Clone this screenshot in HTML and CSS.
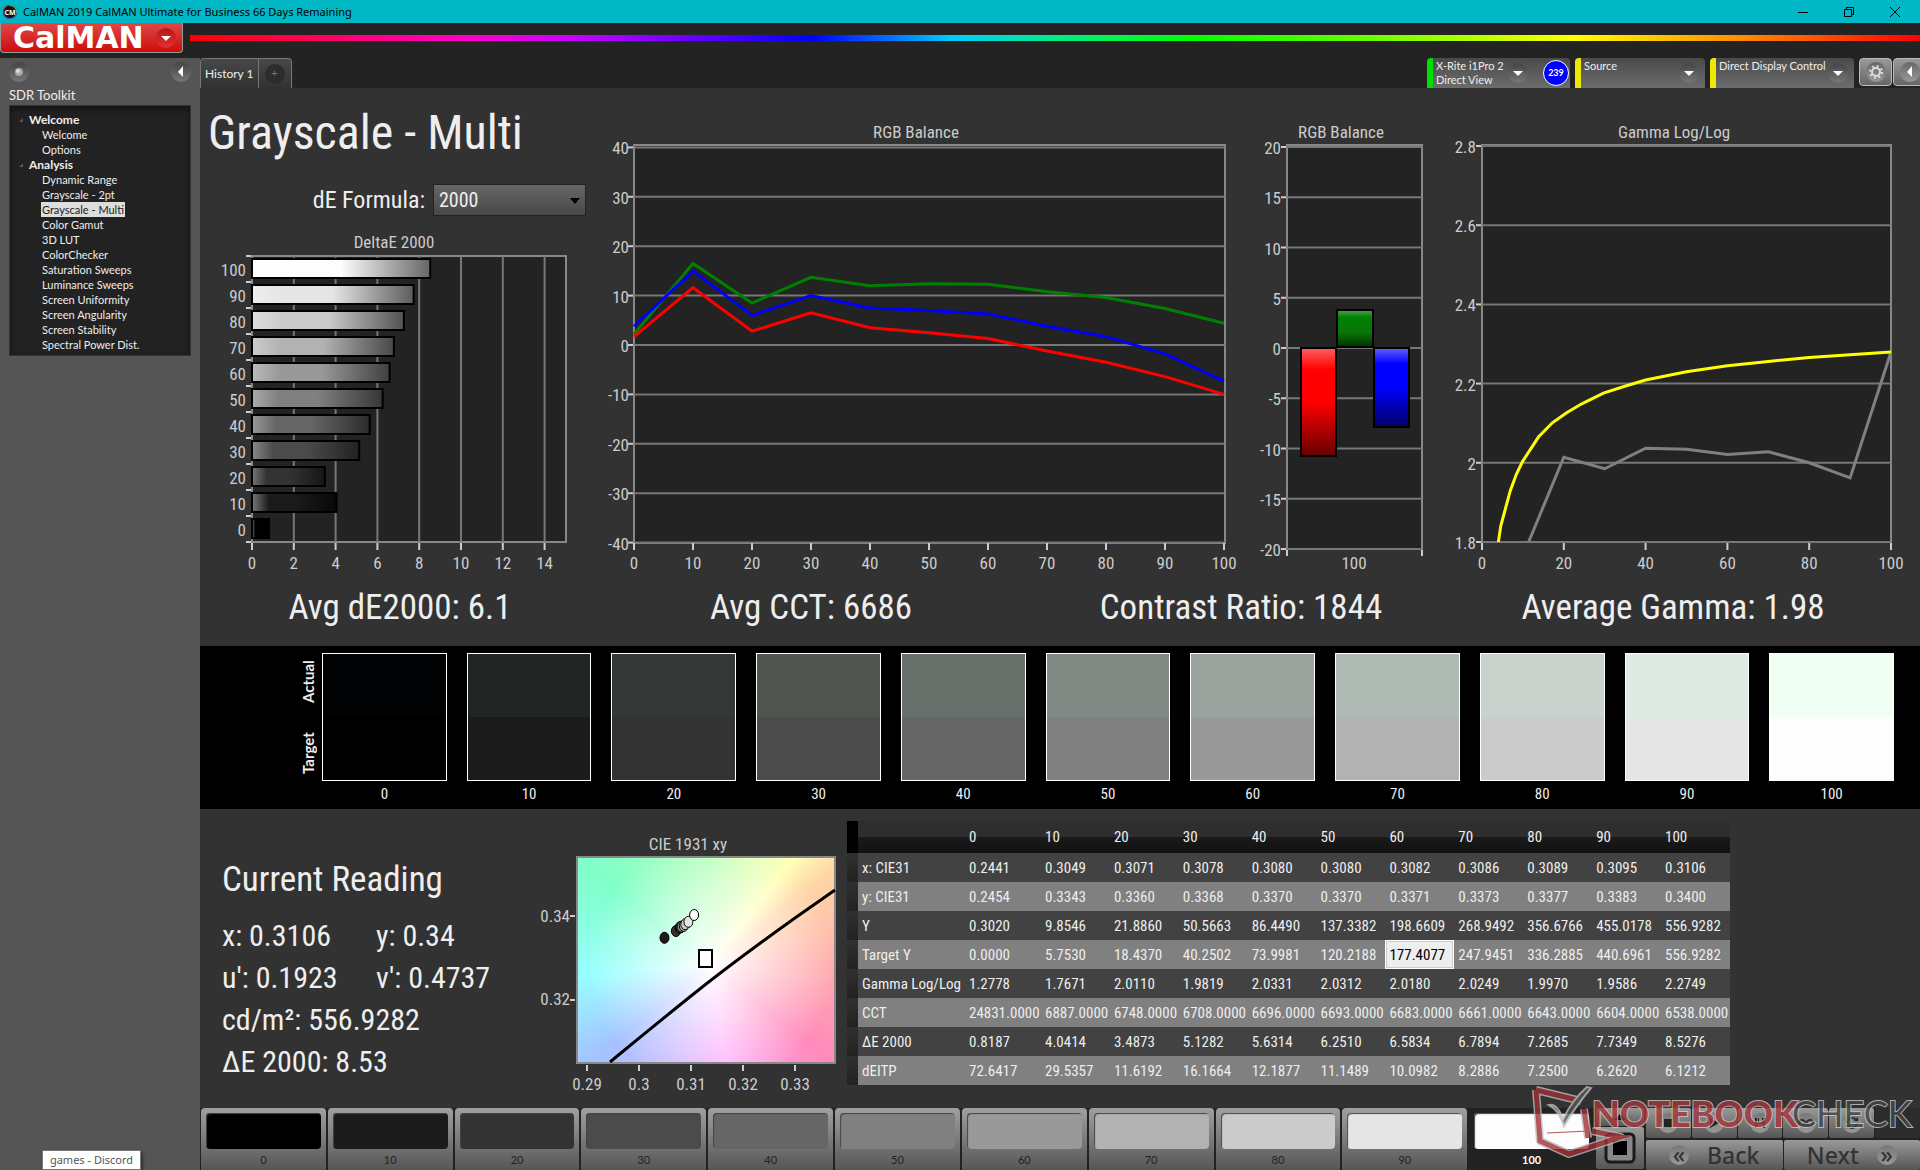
FILE: index.html
```
<!DOCTYPE html>
<html lang="en">
<head>
    <meta charset="UTF-8">
    <meta name="viewport" content="width=device-width, initial-scale=1.0">
    <title>CalMAN 2019</title>
    <link rel="stylesheet" href="styles.css">
</head>
<body>
    <header class="titlebar">
        <svg class="titlebar-icon" viewBox="0 0 16 16">
            <circle cx="8" cy="8" r="7" fill="#111"/>
            <path d="M1.5 8A6.500 6.500 0 0 1 8 1.500" stroke="#c22" fill="none"/>
            <path d="M8 1.500A6.500 6.500 0 0 1 14.500 8" stroke="#9c2" fill="none"/>
            <path d="M14.500 8A6.500 6.500 0 0 1 8 14.500" stroke="#28c" fill="none"/>
            <path d="M8 14.500A6.500 6.500 0 0 1 1.500 8" stroke="#a2c" fill="none"/>
            <text x="8" y="11" text-anchor="middle">CM</text>
        </svg>
        <span class="titlebar-text">CalMAN 2019 CalMAN Ultimate for Business 66 Days Remaining</span>
        <div class="window-controls">
            <button aria-label="Minimize"><svg viewBox="0 0 12 12"><path d="M1 6.500h10"/></svg></button>
            <button aria-label="Restore"><svg viewBox="0 0 12 12"><path d="M1.500 3.500h7v7h-7zM3.500 3.500v-2h7v7h-2"/></svg></button>
            <button aria-label="Close"><svg viewBox="0 0 12 12"><path d="M1 1l10 10M11 1L1 11"/></svg></button>
        </div>
    </header>

    <div class="brandbar">
        <button class="logo">CalMAN <span class="round round-red"><svg viewBox="0 0 20 20"><path d="M5 8h10l-5 5z"/></svg></span></button>
        <div class="rainbow"></div>
    </div>

    <div class="app">
        <aside class="sidebar">
            <div class="sidebar-top">
                <button class="round" aria-label="Pin"><svg viewBox="0 0 20 20"><circle cx="10" cy="10" r="4" fill="#aaa"/><circle cx="9" cy="9" r="2" fill="#ddd"/></svg></button>
                <button class="round" aria-label="Collapse"><svg viewBox="0 0 20 20"><path d="M12 4v11l-5-5z"/></svg></button>
            </div>
            <h2>SDR Toolkit</h2>
            <nav class="tree">
                <h3>Welcome</h3>
                <a href="#">Welcome</a>
                <a href="#">Options</a>
                <h3>Analysis</h3>
                <a href="#">Dynamic Range</a>
                <a href="#">Grayscale - 2pt</a>
                <a href="#" class="active">Grayscale - Multi</a>
                <a href="#">Color Gamut</a>
                <a href="#">3D LUT</a>
                <a href="#">ColorChecker</a>
                <a href="#">Saturation Sweeps</a>
                <a href="#">Luminance Sweeps</a>
                <a href="#">Screen Uniformity</a>
                <a href="#">Screen Angularity</a>
                <a href="#">Screen Stability</a>
                <a href="#">Spectral Power Dist.</a>
            </nav>
            <div class="tooltip">games - Discord</div>
        </aside>

        <main class="content">
            <div class="tabs">
                <button class="tab">History 1</button>
                <button class="tab tab-add" aria-label="Add tab"><span class="round round-dark">+</span></button>
                <div class="devices">
                    <button class="device green">
                        <span class="device-name">X-Rite i1Pro 2<br>Direct View</span>
                        <span class="round"><svg viewBox="0 0 20 20"><path d="M5 8h10l-5 5z"/></svg></span>
                        <span class="badge">239</span>
                    </button>
                    <button class="device">
                        <span class="device-name">Source</span>
                        <span class="round"><svg viewBox="0 0 20 20"><path d="M5 8h10l-5 5z"/></svg></span>
                    </button>
                    <button class="device device-wide">
                        <span class="device-name">Direct Display Control</span>
                        <span class="round"><svg viewBox="0 0 20 20"><path d="M5 8h10l-5 5z"/></svg></span>
                    </button>
                    <div class="tools">
                        <button class="tool" aria-label="Settings"><span class="round round-light"><svg viewBox="0 0 20 20"><circle cx="10" cy="10" r="4" fill="none" stroke="#ddd" stroke-width="2"/><circle cx="10" cy="10" r="6" fill="none" stroke="#ddd" stroke-width="2" stroke-dasharray="2 2.700"/></svg></span></button>
                        <button class="tool" aria-label="Expand"><span class="round round-light"><svg viewBox="0 0 20 20"><path d="M12 4v11l-5-5z"/></svg></span></button>
                    </div>
                </div>
            </div>

            <section class="charts">
                <div class="left">
                    <h1>Grayscale - Multi</h1>
                    <div class="formula">
                        <label for="formula">dE Formula:</label>
                        <select id="formula"><option>2000</option></select>
                    </div>
                    <svg id="deltae" class="chart" viewBox="200 230 400 350"></svg>
                </div>
                <svg id="balance" class="chart" viewBox="600 110 640 480"></svg>
                <svg id="bars" class="chart" viewBox="1240 110 200 480"></svg>
                <svg id="gamma" class="chart" viewBox="1440 110 480 480"></svg>
            </section>

            <section class="stats">
                <div>Avg dE2000: 6.1</div>
                <div>Avg CCT: 6686</div>
                <div>Contrast Ratio: 1844</div>
                <div>Average Gamma: 1.98</div>
            </section>

            <section class="swatches">
                <div class="swatch-side"><span>Actual</span><span>Target</span></div>
                <div class="swatch-list" id="swatches"></div>
            </section>

            <section class="details">
                <div class="reading">
                    <h2>Current Reading</h2>
                    <div class="reading-row"><span>x: 0.3106</span><span>y: 0.34</span></div>
                    <div class="reading-row"><span>u': 0.1923</span><span>v': 0.4737</span></div>
                    <div>cd/m²: 556.9282</div>
                    <div>ΔE 2000: 8.53</div>
                </div>
                <svg id="cie" class="chart" viewBox="532 821 315 285">
                    <foreignObject x="577" y="857" width="258" height="206"><div class="cie-colors"></div></foreignObject>
                </svg>
                <table class="results" id="results"></table>
            </section>

            <footer class="bottombar">
                <div class="levels" id="levels"></div>
                <div class="stop">
                    <button aria-label="Up"><svg viewBox="0 0 48 18"><path d="M18 12l6-6 6 6z"/></svg></button>
                    <button aria-label="Stop"><svg viewBox="0 0 48 42"><rect x="10" y="7" width="28" height="28" rx="4" fill="#888" stroke="#1a1a1a" stroke-width="3"/><rect x="17" y="14" width="14" height="14" fill="#000"/></svg></button>
                </div>
                <div class="transport">
                    <div class="transport-row">
                        <button aria-label="Stop reading"><span class="round"><svg viewBox="0 0 20 20"><path d="M6 6h8v8H6z"/></svg></span></button>
                        <button aria-label="Play"><span class="round"><svg viewBox="0 0 20 20"><path d="M6 5l9 5-9 5z"/></svg></span></button>
                        <button aria-label="Save"><span class="round"><svg viewBox="0 0 20 20"><path d="M5 5h2v10H5zM13 5h2v10h-2zM8 5h1v5h3V5h1v6H8z"/></svg></span></button>
                        <button aria-label="Loop"><span class="round"><svg viewBox="0 0 20 20"><path d="M10 10c-3-5-7-3-7 0s4 5 7 0c3-5 7-3 7 0s-4 5-7 0z" fill="none" stroke="#333" stroke-width="2"/></svg></span></button>
                        <button aria-label="Refresh"><span class="round"><svg viewBox="0 0 20 20"><path d="M5 10a5 5 0 0 1 9-3M15 10a5 5 0 0 1-9 3" fill="none" stroke="#333" stroke-width="2"/><path d="M12 8h4V4zM8 12H4v4z"/></svg></span></button>
                        <button class="off" aria-label="Options"></button>
                    </div>
                    <div class="transport-row nav">
                        <button><span class="round">«</span> Back</button>
                        <button>Next <span class="round">»</span></button>
                    </div>
                </div>
                <svg class="watermark" viewBox="0 0 384 76">
                    <g class="mark-edge">
                        <path d="M5 5L50 16M5 5L9 56 38 69 90 52 61 46M53 24l4 29"/>
                    </g>
                    <g class="mark-red">
                        <path d="M5 5L50 16M5 5L9 56 38 69 90 52 61 46M53 24l4 29"/>
                    </g>
                    <path d="M18 20q8-2 14 14Q42 14 56 2l4 1Q44 22 33 41 28 25 18 20z" fill="#555" stroke="#bbb" stroke-width="2"/>
                    <path d="M16 48L58 46" stroke="#a03035"/>
                    <text x="61" y="42" class="mark-bold">NOTEBOOK</text>
                    <text x="261" y="42" class="mark-thin">CHECK</text>
                </svg>
            </footer>
        </main>
    </div>
    <script src="script.js"></script>
</body>
</html>
```
FILE: styles.css
```
* {
    margin: 0;
    padding: 0;
    box-sizing: border-box;
}
body {
    min-height: 100vh;
    display: flex;
    flex-direction: column;
    background-color: #232323;
    color: #eee;
    font-family: "Roboto Condensed", Roboto, "Liberation Sans", sans-serif;
}
button {
    border: 0;
    background: none;
    color: inherit;
    font: inherit;
}
svg {
    display: block;
}

/* window title */
.titlebar {
    height: 23px;
    display: flex;
    align-items: center;
    background-color: #00b7c5;
    color: #000;
    font-family: "Noto Sans", sans-serif;
    font-size: 11px;
}
.titlebar-icon {
    width: 16px;
    height: 16px;
    margin: 0 5px 0 2px;
    font-size: 7px;
    font-weight: bold;
    fill: #fff;
}
.window-controls {
    margin-left: auto;
    padding-right: 2px;
    display: flex;
}
.window-controls button {
    width: 46px;
    height: 22px;
}
.window-controls svg {
    width: 12px;
    height: 12px;
    margin: auto;
    fill: none;
    stroke: #000;
}

.brandbar {
    height: 35px;
    display: flex;
    gap: 7px;
}
.logo {
    width: 183px;
    height: 30px;
    padding: 0 6px 0 12px;
    display: flex;
    align-items: center;
    justify-content: space-between;
    border: 1px solid #999;
    border-top: 0;
    border-radius: 0 0 4px 4px;
    background: linear-gradient(#e04848, #cc0c0c);
    color: #fff;
    font: bold 30px/28px "DejaVu Sans", sans-serif;
}
.rainbow {
    flex: 1;
    height: 6px;
    margin-top: 12px;
    background: linear-gradient(90deg, #f00, #f0c 16%, #c0f 22%, #00f 36%, #0cf 44%, #0e8 50%, #0f0 58%, #6f0 68%, #ff0 80%, #f80 90%, #f00);
}

.round {
    width: 20px;
    height: 20px;
    display: block;
    flex: none;
    border-radius: 50%;
    background: linear-gradient(#444, #777);
    text-align: center;
    line-height: 18px;
}
.round svg {
    fill: #fff;
}
.round-red {
    background: linear-gradient(#b81818, #e03030);
}
.round-dark {
    background: #2c2c2c;
    color: #777;
}
.round-light {
    background: linear-gradient(#666, #999);
}

.app {
    flex: 1;
    display: flex;
}

/* sidebar */
.sidebar {
    width: 200px;
    padding: 4px 9px 0;
    position: relative;
    background-color: #555;
    font-family: Lato, sans-serif;
    font-size: 11px;
}
.sidebar-top {
    display: flex;
    justify-content: space-between;
}
.sidebar h2 {
    padding-top: 4px;
    font-size: 13px;
    font-weight: normal;
    line-height: 19px;
}
.tree {
    padding: 6px 0 0 31px;
    height: 251px;
    border: 1px solid #333;
    background-color: #222;
    box-shadow: inset 0 4px 6px #161616;
}
.tree h3 {
    margin-left: -12px;
    font-size: 12px;
    line-height: 15px;
    position: relative;
}
.tree h3::before {
    content: "";
    position: absolute;
    left: -10px;
    top: 6px;
    border-left: 4px solid transparent;
    border-bottom: 4px solid #555;
}
.tree a {
    display: table;
    padding: 0 1px;
    color: #eee;
    line-height: 15px;
    text-decoration: none;
}
.tree .active {
    background-color: #ddd;
    color: #222;
}
.tooltip {
    position: absolute;
    left: 42px;
    bottom: 0;
    width: 99px;
    border: 1px solid #777;
    background-color: #fff;
    color: #555;
    box-shadow: 2px 2px 3px #333;
    font-family: "Noto Sans", sans-serif;
    font-size: 11px;
    line-height: 18px;
    text-align: center;
}

/* tabs */
.content {
    flex: 1;
    min-width: 0;
    display: flex;
    flex-direction: column;
    background-color: #323232;
}
.tabs {
    height: 30px;
    display: flex;
    background-color: #232323;
    font-family: Lato, sans-serif;
    font-size: 12px;
}
.tab {
    padding: 0 4px;
    border: 1px solid #777;
    border-bottom: 0;
    border-radius: 4px 0 0 0;
    background: linear-gradient(#484848, #323232);
}
.tab-add {
    padding: 0 6px;
    border-left: 0;
    border-radius: 0 4px 0 0;
}
.devices {
    margin-left: auto;
    display: flex;
    align-items: flex-start;
    gap: 5px;
}
.device {
    width: 130px;
    height: 30px;
    display: flex;
    align-items: center;
    justify-content: space-between;
    padding: 0 6px 0 3px;
    border-left: 6px solid #eee800;
    border-radius: 4px 4px 0 0;
    background: linear-gradient(#4a4a4a, #6c6c6c);
    font-size: 11px;
    line-height: 14px;
    text-align: left;
    white-space: nowrap;
}
.device.green {
    width: 143px;
    padding-right: 1px;
    border-left-color: #00e000;
}
.device-wide {
    width: 144px;
}
.device-name {
    align-self: flex-start;
    padding-top: 1px;
}
.badge {
    width: 26px;
    height: 26px;
    margin-left: 10px;
    border: 1px solid #fff;
    border-radius: 50%;
    background-color: #00f;
    color: #fff;
    font-size: 9px;
    font-weight: bold;
    line-height: 24px;
    text-align: center;
}
.tools {
    width: 61px;
    display: flex;
    gap: 1px;
    overflow: hidden;
}
.tool {
    flex: none;
    width: 33px;
    height: 28px;
    padding: 0 6px;
    border: 1px solid #bbb;
    border-radius: 4px;
    background: linear-gradient(#999, #666);
}

/* charts */
.charts {
    display: grid;
    grid-template-columns: 400fr 640fr 200fr 480fr;
    align-items: start;
    padding-top: 22px;
}
.chart {
    width: 100%;
    overflow: visible;
    font-size: 17px;
    fill: #ccc;
}
.left h1 {
    padding-left: 8px;
    font-size: 48px;
    font-weight: normal;
    line-height: 46px;
}
.formula {
    position: relative;
    height: 74px;
    padding: 14px 14px 0 0;
    display: flex;
    align-items: center;
    justify-content: flex-end;
    gap: 8px;
    font-size: 24px;
}
.formula select {
    width: 153px;
    height: 32px;
    padding-left: 5px;
    appearance: none;
    border: 1px solid #222;
    background: linear-gradient(#666, #484848);
    color: #eee;
    font: inherit;
    font-size: 20px;
}
.formula::after {
    content: "";
    position: absolute;
    right: 20px;
    top: 42px;
    border: 5px solid transparent;
    border-top: 6px solid #000;
}
.plot {
    fill: #232323;
    stroke: #888;
    stroke-width: 2;
}
.grid {
    stroke: #777;
    stroke-width: 2;
}
.tick {
    stroke: #ccc;
    stroke-width: 2;
}
.line {
    fill: none;
    stroke-width: 3;
}
.bar {
    stroke: #000;
    stroke-width: 2;
}
.cie-colors {
    width: 258px;
    height: 206px;
    background:
        radial-gradient(circle at 52% 52%, #fff, rgba(255, 255, 255, 0) 72%),
        conic-gradient(at 52% 52%, #baffbc, #ffffb8 38deg, #ffd6a6 52deg, #ffaeae 90deg, #ff8abb 129deg, #ffb2ff 172deg, #a4c2ff 231deg, #98ffff 265deg, #80ffc8 308deg, #baffbc);
}

.stats {
    height: 56px;
    display: grid;
    grid-template-columns: 400fr 422fr 438fr 426fr;
    padding-right: 34px;
    font-size: 35px;
    line-height: 36px;
    text-align: center;
}

/* actual / target swatches */
.swatches {
    height: 163px;
    display: flex;
    padding: 7px 26px 0 95px;
    background-color: #000;
}
.swatch-side {
    width: 27px;
    height: 128px;
    padding: 7px 0;
    display: flex;
    flex-direction: row-reverse;
    justify-content: space-between;
    writing-mode: vertical-rl;
    transform: rotate(180deg);
    font-family: Lato, sans-serif;
    font-size: 15px;
    font-weight: bold;
    line-height: 26px;
}
.swatch-list {
    flex: 1;
    display: grid;
    grid-template-columns: repeat(11, 1fr);
    gap: 20px;
    font-size: 15px;
    line-height: 26px;
    text-align: center;
}
.swatch-box {
    height: 128px;
    border: 1px solid #fff;
}
.swatch-box div {
    height: 63px;
}

/* readings and table */
.details {
    flex: 1;
    display: flex;
    align-items: flex-start;
    padding-top: 12px;
}
.reading {
    width: 332px;
    padding: 36px 0 0 22px;
    font-size: 30px;
    line-height: 42px;
    white-space: nowrap;
}
.reading h2 {
    margin-bottom: 12px;
    font-size: 35px;
    font-weight: normal;
    line-height: 46px;
}
.reading-row {
    display: grid;
    grid-template-columns: 154px 1fr;
}
.details .chart {
    width: 315px;
}
.results {
    width: 883px;
    border-collapse: collapse;
    table-layout: fixed;
    font-size: 15px;
    text-align: left;
    white-space: nowrap;
}
.results th {
    font-weight: normal;
}
.results td, .results th {
    height: 29px;
    padding-left: 4px;
}
.results thead th {
    height: 32px;
    background: linear-gradient(#2e2e2e 50%, #1a1a1a 50%, #111);
}
.results tbody tr {
    background-color: #424242;
}
.results tbody tr:nth-child(even) {
    background-color: #808080;
}
.results .gutter {
    width: 11px;
    padding: 0;
    background: linear-gradient(#303030, #222);
}
.results thead .gutter {
    background: #000;
}
.results .name {
    width: 107px;
}
.results .first {
    width: 76px;
}
.results .selected {
    background-color: #eee;
    box-shadow: inset 0 0 0 1px #fff, inset 0 0 0 2px #ccc;
    color: #000;
}

/* bottom bar */
.bottombar {
    height: 62px;
    display: flex;
    gap: 2px;
    padding-left: 1px;
    position: relative;
    background-color: #222;
}
.levels {
    flex: 1;
    display: grid;
    grid-template-columns: repeat(11, 1fr);
    gap: 2px;
}
.level {
    padding: 5px;
    border-radius: 4px;
    background: linear-gradient(#a0a0a0, #505050);
    color: #222;
    font-family: Lato, sans-serif;
    font-size: 11px;
    line-height: 21px;
}
.level div {
    height: 36px;
    border-radius: 4px;
    box-shadow: inset 1px 1px 1px #444;
}
.level.active {
    background: #222;
    color: #fff;
    font-weight: bold;
}
.stop {
    width: 48px;
    display: flex;
    flex-direction: column;
    gap: 1px;
}
.stop button, .transport button {
    border-radius: 2px;
    background: linear-gradient(#999, #555);
}
.transport {
    width: 274px;
    display: flex;
    flex-direction: column;
    gap: 2px;
}
.transport-row {
    flex: 1;
    display: flex;
    gap: 1px;
}
.transport-row button {
    flex: 1;
    display: flex;
    align-items: center;
    justify-content: center;
    color: #333;
}
.transport-row .off {
    background: #2c2c2c;
}
.transport .round {
    background: linear-gradient(#777, #999);
}
.transport .round svg {
    fill: #222;
}
.nav button {
    gap: 18px;
    font-family: "Noto Sans", sans-serif;
    font-size: 23px;
    font-weight: 500;
    line-height: 26px;
}
.watermark {
    width: 384px;
    height: 76px;
    position: absolute;
    right: 5px;
    bottom: 9px;
    opacity: 0.8;
    font-family: Lato, sans-serif;
    font-size: 36px;
    pointer-events: none;
}
.mark-edge path {
    fill: none;
    stroke: #bbb;
    stroke-width: 8;
    stroke-linejoin: round;
}
.mark-red path {
    fill: none;
    stroke: #a03035;
    stroke-width: 5;
}
.mark-bold, .mark-thin {
    stroke: #ccc;
    stroke-width: 2;
    paint-order: stroke;
    fill: #a5363b;
    font-weight: 900;
}
.mark-thin {
    fill: #444;
    font-weight: normal;
}
```
FILE: script.js
```
let levels = [0, 10, 20, 30, 40, 50, 60, 70, 80, 90, 100];
let actual = ['#000204', '#212524', '#343937', '#50564f', '#67706b', '#808984', '#9aa39d', '#afbab4', '#c9d2cc', '#deebe2', '#f0fff4'];
let target = ['#000', '#1b1b1b', '#333', '#4b4b4b', '#666', '#808080', '#999', '#b2b2b2', '#cbcbcb', '#e5e5e5', '#fdfdfd'];

let rows = {
    'x: CIE31': ['0.2441', '0.3049', '0.3071', '0.3078', '0.3080', '0.3080', '0.3082', '0.3086', '0.3089', '0.3095', '0.3106'],
    'y: CIE31': ['0.2454', '0.3343', '0.3360', '0.3368', '0.3370', '0.3370', '0.3371', '0.3373', '0.3377', '0.3383', '0.3400'],
    'Y': ['0.3020', '9.8546', '21.8860', '50.5663', '86.4490', '137.3382', '198.6609', '268.9492', '356.6766', '455.0178', '556.9282'],
    'Target Y': ['0.0000', '5.7530', '18.4370', '40.2502', '73.9981', '120.2188', '177.4077', '247.9451', '336.2885', '440.6961', '556.9282'],
    'Gamma Log/Log': ['1.2778', '1.7671', '2.0110', '1.9819', '2.0331', '2.0312', '2.0180', '2.0249', '1.9970', '1.9586', '2.2749'],
    'CCT': ['24831.0000', '6887.0000', '6748.0000', '6708.0000', '6696.0000', '6693.0000', '6683.0000', '6661.0000', '6643.0000', '6604.0000', '6538.0000'],
    'ΔE 2000': ['0.8187', '4.0414', '3.4873', '5.1282', '5.6314', '6.2510', '6.5834', '6.7894', '7.2685', '7.7349', '8.5276'],
    'dEITP': ['72.6417', '29.5357', '11.6192', '16.1664', '12.1877', '11.1489', '10.0982', '8.2886', '7.2500', '6.2620', '6.1212']
};

// svg helpers
function line(x1, y1, x2, y2, cls) {
    return `<line x1="${x1}" y1="${y1}" x2="${x2}" y2="${y2}" class="${cls}"/>`;
}
function text(x, y, str, anchor = 'middle') {
    return `<text x="${x}" y="${y}" text-anchor="${anchor}">${str}</text>`;
}
function rect(x, y, w, h, cls, fill = '') {
    return `<rect x="${x}" y="${y}" width="${w}" height="${h}" class="${cls}" ${fill && `fill="${fill}"`}/>`;
}
function gradient(id, dir, stops) {
    return `<linearGradient id="${id}" ${dir}>` + stops.map(s => `<stop offset="${s[0]}" stop-color="${s[1]}"/>`).join('') + '</linearGradient>';
}
function series(points, color) {
    return `<polyline class="line" stroke="${color}" points="${points.map(p => p.join(',')).join(' ')}"/>`;
}
function draw(id, html) {
    document.getElementById(id).insertAdjacentHTML('beforeend', html);
}

// DeltaE bars
function drawDeltaE() {
    let x0 = 252, unit = 20.9, top = 256, step = 26;
    let out = text(394, 248, 'DeltaE 2000') + rect(x0, top, 314, 286, 'plot');
    for (let v = 0; v < 15; v += 2) {
        let x = x0 + v * unit;
        if (v) out += line(x, top, x, 542, 'grid');
        out += line(x, 543, x, 550, 'tick') + text(x, 569, v);
    }
    for (let i = 0; i <= 11; i++) {
        out += line(246, top + i * step, 251, top + i * step, 'tick');
    }
    levels.forEach((lv, i) => {
        let y = top + (10 - i) * step;
        let start = ['#777', '#777', '#777', '#888', '#999', '#aaa', '#bbb', '#ccc', '#ddd', '#eee', '#fff'][i];
        let end = ['#000', '#080808', '#161616', '#222', '#2c2c2c', '#363636', '#404040', '#484848', '#525252', '#5c5c5c', '#666'][i];
        out += gradient('g' + lv, '', [[0, start], [0.2, target[i]], [0.5, target[i]], [1, end]]);
        out += rect(x0, y + 3, rows['ΔE 2000'][i] * unit, 19, 'bar', `url(#g${lv})`);
        out += text(246, y + 20, lv, 'end');
    });
    draw('deltae', out);
}

// RGB balance lines
function drawBalance() {
    let x = v => 634 + v * 5.9;
    let y = v => 345 - v * 4.94;
    let out = text(916, 138, 'RGB Balance') + rect(634, 145, 591, 398, 'plot');
    for (let v = -40; v <= 40; v += 10) {
        out += line(634, y(v), 1225, y(v), 'grid') + line(628, y(v), 633, y(v), 'tick') + text(629, y(v) + 7, v, 'end');
    }
    levels.forEach(v => out += line(x(v), 543, x(v), 550, 'tick') + text(x(v), 569, v));
    let data = {
        green: [2.2, 16.5, 8.5, 13.7, 12, 12.4, 12.3, 10.8, 9.6, 7.4, 4.4],
        blue: [3.8, 15, 6, 10, 7.5, 7, 6.3, 3.8, 1.7, -1.8, -7.3],
        red: [1.7, 11.6, 2.8, 6.5, 3.5, 2.5, 1.3, -1.2, -3.5, -6.4, -10]
    };
    for (let color in data) {
        out += series(data[color].map((v, i) => [x(levels[i]), y(v)]), color);
    }
    draw('balance', out);
}

// RGB balance bars for the current level
function drawBars() {
    let y = v => 348 - v * 10.05;
    let out = text(1341, 138, 'RGB Balance') + rect(1287, 145, 135, 404, 'plot');
    for (let v = -20; v <= 20; v += 5) {
        out += line(1287, y(v), 1422, y(v), 'grid') + line(1281, y(v), 1286, y(v), 'tick') + text(1281, y(v) + 7, v, 'end');
    }
    out += line(1287, 550, 1287, 556, 'tick') + line(1422, 550, 1422, 556, 'tick') + text(1354, 569, 100);
    let dir = 'x1="0" y1="0" x2="0" y2="1"';
    out += gradient('r', dir, [[0, '#ff6060'], [0.2, '#f00'], [0.5, '#f00'], [1, '#600']]);
    out += gradient('g', dir, [[0, '#50a050'], [0.2, '#008000'], [0.6, '#0a760a'], [1, '#003000']]);
    out += gradient('b', dir, [[0, '#6060ff'], [0.2, '#00f'], [0.5, '#00f'], [1, '#006']]);
    out += rect(1301, 348, 35, 108, 'bar', 'url(#r)') + rect(1337, 310, 36, 37, 'bar', 'url(#g)') + rect(1374, 348, 35, 79, 'bar', 'url(#b)');
    draw('bars', out);
}

// gamma
function drawGamma() {
    let x = v => 1482 + v * 4.09;
    let y = v => 146 + (2.8 - v) * 396;
    let out = text(1674, 138, 'Gamma Log/Log') + rect(1482, 145, 409, 397, 'plot');
    for (let v of [1.8, 2, 2.2, 2.4, 2.6, 2.8]) {
        out += line(1482, y(v), 1891, y(v), 'grid') + line(1476, y(v), 1481, y(v), 'tick') + text(1476, y(v) + 7, v, 'end');
    }
    for (let v = 0; v <= 100; v += 20) {
        out += line(x(v), 543, x(v), 550, 'tick') + text(x(v), 569, v);
    }
    let measured = [[11.4, 1.8], [20, 2.014], [30, 1.985], [40, 2.037], [50, 2.034], [60, 2.021], [70, 2.028], [80, 2], [90, 1.962], [100, 2.28]];
    let ideal = [[4, 1.8], [4.6, 1.841], [6.9, 1.929], [8.4, 1.971], [9.9, 2.003], [13.8, 2.065], [17.2, 2.101], [20.6, 2.126], [24.4, 2.149], [29.7, 2.176], [35.1, 2.194], [40, 2.209], [50, 2.23], [60, 2.245], [70, 2.256], [80, 2.266], [90, 2.273], [100, 2.28]];
    out += series(measured.map(p => [x(p[0]), y(p[1])]), '#808080');
    out += series(ideal.map(p => [x(p[0]), y(p[1])]), '#ff0');
    draw('gamma', out);
}

// CIE 1931 xy
function drawCie() {
    let x = v => 587 + (v - 0.29) * 5200;
    let y = v => 915 - (v - 0.34) * 4000;
    let out = text(688, 850, 'CIE 1931 xy') + '<rect x="577" y="857" width="258" height="206" fill="none" stroke="#888" stroke-width="2"/>';
    for (let v of [0.29, 0.3, 0.31, 0.32, 0.33]) {
        out += line(x(v), 1065, x(v), 1071, 'tick') + text(x(v), 1090, v);
    }
    out += line(570, 916, 575, 916, 'tick') + text(570, 922, 0.34, 'end');
    out += line(570, 1000, 575, 1000, 'tick') + text(570, 1005, 0.32, 'end');
    out += '<path d="M610 1062Q650 1029 691 996T795 918L835 890" fill="none" stroke="#000" stroke-width="3"/>';
    levels.slice(1).forEach((lv, i) => {
        out += `<ellipse cx="${x(rows['x: CIE31'][i + 1])}" cy="${y(rows['y: CIE31'][i + 1])}" rx="4.5" ry="5.5" fill="${target[i + 1]}" stroke="#000"/>`;
    });
    out += '<rect x="699" y="950" width="13" height="17" fill="#fff" stroke="#000" stroke-width="2"/>';
    draw('cie', out);
}

function drawTable() {
    let head = '<th class="gutter"></th><th class="name"></th>';
    levels.forEach((lv, i) => head += `<th scope="col" class="${i ? '' : 'first'}">${lv}</th>`);
    let body = '';
    for (let name in rows) {
        body += `<tr><td class="gutter"></td><th scope="row">${name}</th>`;
        rows[name].forEach((v, i) => {
            let selected = name === 'Target Y' && levels[i] === 60;
            body += `<td class="${selected ? 'selected' : ''}">${v}</td>`;
        });
        body += '</tr>';
    }
    draw('results', `<thead><tr>${head}</tr></thead><tbody>${body}</tbody>`);
}

levels.forEach((lv, i) => {
    draw('swatches', `<div><div class="swatch-box"><div style="background-color: ${actual[i]}"></div><div style="background-color: ${target[i]}"></div></div>${lv}</div>`);
    draw('levels', `<button class="level ${lv === 100 ? 'active' : ''}"><div style="background-color: ${target[i]}"></div>${lv}</button>`);
});
drawDeltaE();
drawBalance();
drawBars();
drawGamma();
drawCie();
drawTable();
```
